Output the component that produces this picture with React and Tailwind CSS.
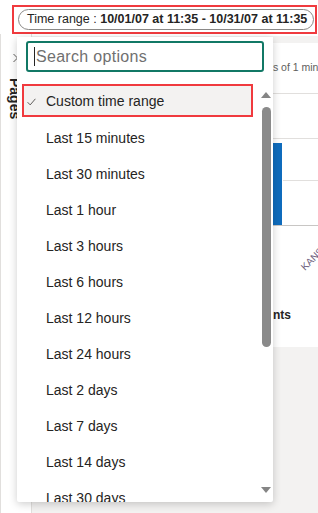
import React from 'react';

const options = [
    'Last 15 minutes',
    'Last 30 minutes',
    'Last 1 hour',
    'Last 3 hours',
    'Last 6 hours',
    'Last 12 hours',
    'Last 24 hours',
    'Last 2 days',
    'Last 7 days',
    'Last 14 days',
    'Last 30 days',
];

const Check = () => (
    <svg width="9" height="8" viewBox="0 0 9 8" fill="none" className="shrink-0">
        <path d="M0.6 4.2 L3.2 6.9 L8.4 0.8" stroke="#605e5c" strokeWidth="1" />
    </svg>
);

const Arrow = ({ up }) => (
    <svg width="10" height="6" viewBox="0 0 10 6">
        <polygon points={up ? '5,0 10,6 0,6' : '0,0 10,0 5,6'} fill="#858585" />
    </svg>
);

const ReportCard = () => (
    <div className="mt-[7px] ml-[8px] h-[304px] flex-1 bg-white flex flex-col overflow-hidden">
        {/* Visual header */}
        <div className="h-[50px] flex items-center justify-end whitespace-nowrap">
            <span className="text-[10.5px] text-[#605e5c] -mr-[15px]">Event counts of 1 minute</span>
        </div>

        {/* Chart */}
        <svg width="278" height="200" className="shrink-0">
            <line x1="0" y1="0.5" x2="278" y2="0.5" stroke="#e1dfdd" />
            <line x1="0" y1="45.5" x2="278" y2="45.5" stroke="#e1dfdd" />
            <line x1="243" y1="87.5" x2="278" y2="87.5" stroke="#e1dfdd" />
            <rect x="233" y="50" width="9" height="82" fill="#0f6cbd" />
            <line x1="0" y1="132.5" x2="278" y2="132.5" stroke="#c8c6c4" />
            <text
                x="265"
                y="178"
                fontSize="10"
                fill="#6e5f80"
                fontFamily="Liberation Sans, sans-serif"
                transform="rotate(-45 265 178)"
            >
                KANSAS
            </text>
        </svg>

        {/* Next visual title */}
        <div className="mt-[13px] w-[251px] text-right text-[12px] font-bold text-[#252423]">Events</div>
    </div>
);

const TimeRangeDropdown = () => (
    <div className="absolute left-[17px] top-[37px] w-[256px] h-[465px] bg-white shadow-[0_2px_8px_rgba(0,0,0,0.2)] rounded-b-[2px] overflow-hidden">
        {/* Search */}
        <div className="mt-[4px] mx-[9px] h-[31px] border-2 border-[#117865] rounded-[3px] flex items-center pl-[6px]">
            <div className="w-px h-[19px] bg-[#252423]" />
            <span className="text-[16px] tracking-[0.3px] text-[#707070] ml-[1px]">Search options</span>
        </div>

        <div className="flex">
            {/* Options */}
            <ul className="mt-[12px] ml-[5px] w-[231px]">
                <li className="h-9">
                    <div className="h-[33px] border-2 border-[#f03a3e] bg-[#f3f2f1] flex items-center pl-[3px] pt-[2px]">
                        <Check />
                        <span className="ml-[10px] text-[14px] text-[#252423]">Custom time range</span>
                    </div>
                </li>
                {options.map((o) => (
                    <li key={o} className="h-9 flex items-center pl-[24px] text-[14px] text-[#252423]">
                        {o}
                    </li>
                ))}
            </ul>

            {/* Scrollbar */}
            <div className="ml-[8px] w-[10px] flex flex-col items-center">
                <div className="mt-[20px]">
                    <Arrow up />
                </div>
                <div className="mt-[9px] w-[9px] h-[240px] rounded-full bg-[#8a8a8a]" />
                <div className="mt-[140px]">
                    <Arrow />
                </div>
            </div>
        </div>
    </div>
);

export default function App() {
    return (
        <div
            className="relative w-[318px] h-[513px] overflow-hidden bg-[#f3f2f1] flex flex-col"
            style={{ fontFamily: '"Liberation Sans", Arial, sans-serif' }}
        >
            {/* Filter bar */}
            <div className="h-[36px] bg-white shrink-0 pt-[5px] pl-[12px]">
                <div className="w-[305px] h-[29px] border-2 border-[#f03a3e] pt-[2px] pl-[4px]">
                    <div className="h-[21px] w-[296px] rounded-full border border-[#8a8886] bg-white flex items-center pl-[8px] whitespace-nowrap text-[12.5px] text-[#252423]">
                        <span>Time range :&nbsp;</span>
                        <span className="font-bold">10/01/07 at 11:35 - 10/31/07 at 11:35</span>
                    </div>
                </div>
            </div>

            <div className="flex flex-1">
                {/* Pages pane */}
                <div className="w-[32px] shrink-0 bg-white border-l border-r border-[#e1dfdd] flex flex-col -mt-[2px]">
                    <svg width="8" height="10" viewBox="0 0 8 10" fill="none" className="mt-[19px] ml-[11px]">
                        <path d="M1.5 1 L5.5 5 L1.5 9" stroke="#605e5c" strokeWidth="1" />
                    </svg>
                    <div className="mt-[15px] ml-[6px] w-[16px] h-[50px] [writing-mode:vertical-rl] text-[14px] leading-[16px] font-bold text-[#252423]">
                        Pages
                    </div>
                </div>

                <ReportCard />
            </div>

            <TimeRangeDropdown />
        </div>
    );
}
